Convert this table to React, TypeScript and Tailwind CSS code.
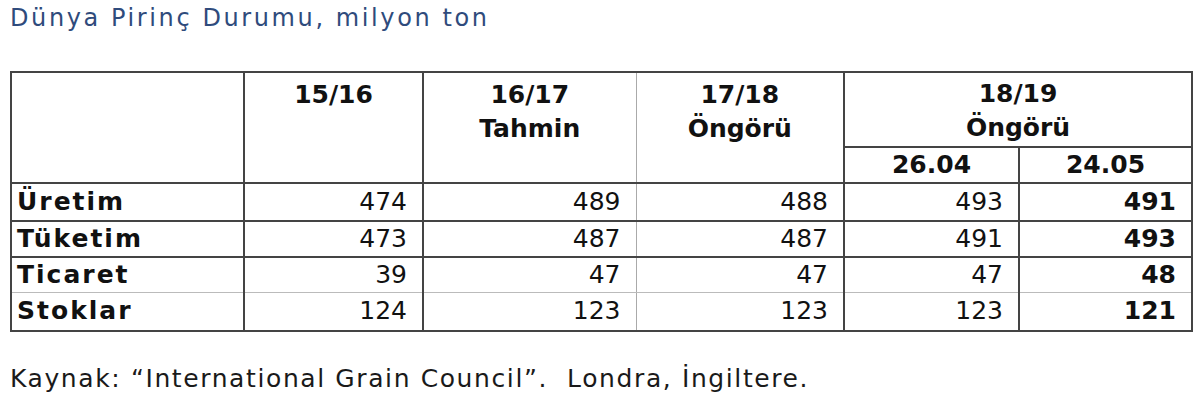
const rows = [
    { label: "Üretim", values: ["474", "489", "488", "493", "491"] },
    { label: "Tüketim", values: ["473", "487", "487", "491", "493"] },
    { label: "Ticaret", values: ["39", "47", "47", "47", "48"] },
    { label: "Stoklar", values: ["124", "123", "123", "123", "121"] },
]

const font = { fontFamily: '"DejaVu Sans", "Liberation Sans", sans-serif' }

export default function App() {
    return (
        <div className="w-[1200px] h-[404px] bg-white text-[#111] pl-[10px]" style={font}>
            <h1 className="text-[#2f4b7c] text-[24px] leading-[36px] tracking-[2.6px]">
                Dünya Pirinç Durumu, milyon ton
            </h1>

            <table className="mt-[35px] border-collapse border-2 border-[#444] text-[25px] leading-[34px]">
                <colgroup>
                    <col className="w-[233px]" />
                    <col className="w-[179px]" />
                    <col className="w-[213px]" />
                    <col className="w-[208px]" />
                    <col className="w-[175px]" />
                    <col className="w-[173px]" />
                </colgroup>
                <thead className="font-bold">
                    <tr className="h-[75px]">
                        <th rowSpan={2} className="border-2 border-[#444]" />
                        <th rowSpan={2} className="border-2 border-[#444] align-top pt-[5px]">15/16</th>
                        <th rowSpan={2} className="border-2 border-r border-[#444] border-r-[#aaa] align-top pt-[5px]">
                            16/17<br />Tahmin
                        </th>
                        <th rowSpan={2} className="border-2 border-l border-[#444] border-l-[#aaa] align-top pt-[5px]">
                            17/18<br />Öngörü
                        </th>
                        <th colSpan={2} className="border-2 border-[#444] align-top pt-[4px]">
                            18/19<br />Öngörü
                        </th>
                    </tr>
                    <tr className="h-[35px]">
                        <th className="border-2 border-[#444] font-bold">26.04</th>
                        <th className="border-2 border-[#444] font-bold">24.05</th>
                    </tr>
                </thead>
                <tbody>
                    {rows.map((row, i) => (
                        <tr key={row.label} className={i === 0 || i === 3 ? "h-[38px]" : "h-[35px]"}>
                            <td
                                className={`border-2 border-[#444] pl-[5px] font-bold tracking-[2px] ${
                                    i === 2 ? "border-b border-b-[#bbb]" : ""
                                } ${i === 3 ? "border-t border-t-[#bbb]" : ""}`}
                            >
                                {row.label}
                            </td>
                            {row.values.map((v, j) => (
                                <td
                                    key={j}
                                    className={`border-2 border-[#444] text-right pr-[15px] ${
                                        j === 4 ? "font-bold" : ""
                                    } ${j === 1 ? "border-r border-r-[#aaa]" : ""} ${
                                        j === 2 ? "border-l border-l-[#aaa]" : ""
                                    } ${i === 2 ? "border-b border-b-[#bbb]" : ""} ${
                                        i === 3 ? "border-t border-t-[#bbb]" : ""
                                    }`}
                                >
                                    {v}
                                </td>
                            ))}
                        </tr>
                    ))}
                </tbody>
            </table>

            <p className="mt-[30px] text-[25px] leading-[34px] tracking-[1.6px] text-[#1a1a1a]">
                Kaynak: “International Grain Council”.&nbsp; Londra, İngiltere.
            </p>
        </div>
    )
}
